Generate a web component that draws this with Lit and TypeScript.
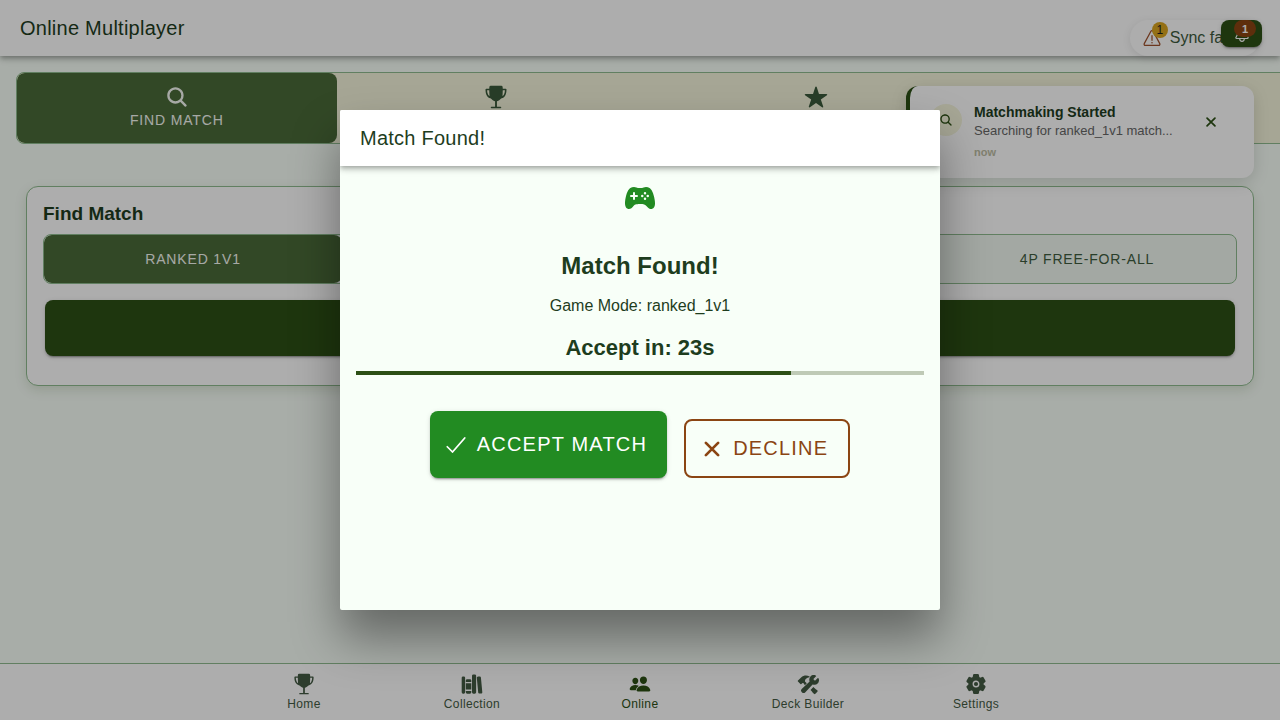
import { LitElement, html, css, svg, nothing } from "lit";
import { customElement, property, state } from "lit/decorators.js";
import { classMap } from "lit/directives/class-map.js";

const ICONS: Record<string, unknown> = {
  search: svg`<path d="M456.69 421.39L362.6 327.3a173.81 173.81 0 0034.84-104.58C397.44 126.38 319.06 48 222.72 48S48 126.38 48 222.72s78.38 174.72 174.72 174.72A173.81 173.81 0 00327.3 362.6l94.09 94.09a25 25 0 0035.3-35.3zM97.92 222.72a124.8 124.8 0 11124.8 124.8 124.95 124.95 0 01-124.8-124.8z"/>`,
  trophy: svg`<path d="M114 46Q115 16 144 16H368Q397 16 398 46L400 80H464a16 16 0 0116 16c0 54-10 99-30 131-18 29-43 48-74 58-12 4-20 12-29 20-20 20-42 36-71 41V464h76a16 16 0 010 32H160a16 16 0 010-32h76V346c-29-5-51-21-71-41-9-8-17-16-29-20-31-10-56-29-74-58C42 195 32 150 32 96A16 16 0 0148 80H112zM65 112c2 38 10 72 24 97 8 14 18 24 29 32-3-40-6-84-6-129zM447 112h-47c0 45-3 89-6 129 11-8 21-18 29-32 14-25 22-59 24-97z"/>`,
  star: svg`<path d="M394 480a16 16 0 01-9.39-3L256 383.76 127.39 477a16 16 0 01-24.55-18.08L153 310.35 23 221.2a16 16 0 019-29.2h160.38l48.4-148.95a16 16 0 0130.44 0l48.4 149H480a16 16 0 019.05 29.2L359 310.35l50.13 148.53A16 16 0 01394 480z"/>`,
  time: svg`<path d="M256 48a208 208 0 100 416 208 208 0 000-416zm96 240h-96a16 16 0 01-16-16V128a16 16 0 0132 0v128h80a16 16 0 010 32z"/>`,
  game: svg`<path d="M483.13 245.38C461.92 149.49 430 98.31 382.65 84.33A107.13 107.13 0 00352 80c-13.71 0-25.65 3.34-38.28 6.88C298.5 91.15 281.21 96 256 96s-42.51-4.84-57.76-9.11C185.6 83.34 173.67 80 160 80a115.74 115.74 0 00-31.73 4.32c-47.1 13.92-79 65.08-100.52 161C4.61 348.54 16 413.71 59.69 428.83a56.62 56.62 0 0018.64 3.22c29.93 0 53.93-24.93 70.33-45.34 18.53-23.1 40.22-34.82 107.34-34.82 59.95 0 84.76 8.13 106.19 34.82 13.47 16.78 26.2 28.52 38.9 35.91 16.89 9.82 33.77 12 50.16 6.37 25.82-8.81 40.62-32.1 44-69.24 2.57-28.48-1.39-65.89-12.17-114.37zM208 240h-32v32a16 16 0 01-32 0v-32h-32a16 16 0 010-32h32v-32a16 16 0 0132 0v32h32a16 16 0 010 32zm84 4a20 20 0 1120-20 20 20 0 01-20 20zm44 44a20 20 0 1120-20 20 20 0 01-20 20zm0-88a20 20 0 1120-20 20 20 0 01-20 20zm44 44a20 20 0 1120-20 20 20 0 01-20 20z"/>`,
  people: svg`<path d="M336 256c-20.56 0-40.44-9.18-56-25.84-15.13-16.25-24.37-37.92-26-61-1.74-24.62 5.77-47.26 21.14-63.76S312 80 336 80c23.83 0 45.38 9.06 60.7 25.52 15.47 16.62 23 39.22 21.26 63.63-1.67 23.11-10.9 44.77-26 61C376.44 246.82 356.57 256 336 256zM467.83 432H204.18a27.71 27.71 0 01-22-10.67 30.22 30.22 0 01-5.26-25.79c8.42-33.81 29.28-61.85 60.32-81.08C264.79 297.4 299.86 288 336 288c36.85 0 71 9 98.71 26.05 31.11 19.13 52 47.33 60.38 81.55a30.27 30.27 0 01-5.32 25.78A27.68 27.68 0 01467.83 432zM147 260c-35.19 0-66.13-32.72-69-72.93-1.42-20.6 5-39.65 18-53.62 12.86-13.83 31-21.45 51-21.45s38 7.66 50.93 21.57c13.1 14.08 19.5 33.09 18 53.52-2.87 40.2-33.8 72.91-68.93 72.91zM212.66 291.45c-17.59-8.6-40.42-12.9-65.65-12.9-29.46 0-58.07 7.68-80.57 21.62-25.51 15.83-42.67 38.88-49.6 66.71a27.39 27.39 0 004.79 23.36A25.32 25.32 0 0041.72 400h111a8 8 0 007.87-6.57c.11-.63.25-1.26.41-1.88 8.48-34.06 28.35-62.84 57.71-83.82a8 8 0 00-.63-13.39c-1.57-.92-3.37-1.89-5.42-2.89z"/>`,
  construct: svg`<path d="M503.58 126.2a16.85 16.85 0 00-27.07-4.55l-51.15 51.15a11.15 11.15 0 01-15.66 0l-22.48-22.48a11.17 11.17 0 010-15.67l50.88-50.89a16.85 16.85 0 00-5.27-27.4c-39.71-17-89.08-7.45-120 23.29-26.81 26.61-34.83 68-22 113.7a11 11 0 01-3.16 11.1L114.77 365.1a56.76 56.76 0 1080.14 80.18L357 272.08a11 11 0 0110.9-3.17c45 12 86 4 112.43-22 15.2-15 25.81-36.17 29.89-59.71 3.83-22.2 1.41-44.44-6.64-61z"/><path d="M437 378c-14-12-34-30-56-50l-66 70c20 22 38 42 48 54l30 31a24 24 0 0035 1l46-46a24 24 0 00-2-35zM228 240l-38-36c-6-7-7-16-4-26 6-20 5-28 24-44 20-17 50-30 78-34 10-3 12-12 4-18-60-36-140-30-196 22l-74 72c-8 8-8 14 0 22l58 60c7 7 14 7 21 0l22-22c6-6 16-8 24-3l37 50z"/>`,
  settings: svg`<circle cx="256" cy="256" r="48"/><path d="M470.39 300l-.47-.38-31.56-24.75a16.11 16.11 0 01-6.1-13.33v-11.56a16 16 0 016.11-13.22L469.92 212l.47-.38a26.68 26.68 0 005.9-34.06l-42.71-73.9a1.59 1.59 0 01-.13-.22A26.86 26.86 0 00401 92.14l-.35.13-37.1 14.93a15.94 15.94 0 01-14.47-1.29q-4.92-3.1-10-5.86a15.94 15.94 0 01-8.19-11.82l-5.59-39.59-.12-.72A27.22 27.22 0 00298.76 26h-85.52a26.92 26.92 0 00-26.45 22.39l-.09.56-5.57 39.67a16 16 0 01-8.13 11.82 175.21 175.21 0 00-10 5.82 15.92 15.92 0 01-14.43 1.27l-37.13-15-.35-.14a26.87 26.87 0 00-32.48 11.34l-.13.22-42.77 73.95a26.71 26.71 0 005.9 34.1l.47.38 31.56 24.75a16.11 16.11 0 016.1 13.33v11.56a16 16 0 01-6.11 13.22L42.08 300l-.47.38a26.68 26.68 0 00-5.9 34.06l42.71 73.9a1.59 1.59 0 01.13.22 26.86 26.86 0 0032.45 11.3l.35-.13 37.07-14.93a15.94 15.94 0 0114.47 1.29q4.92 3.11 10 5.86a15.94 15.94 0 018.19 11.82l5.56 39.59.12.72A27.22 27.22 0 00213.24 486h85.52a26.92 26.92 0 0026.45-22.39l.09-.56 5.57-39.67a16 16 0 018.18-11.82c3.42-1.84 6.76-3.79 10-5.82a15.92 15.92 0 0114.43-1.27l37.13 14.95.35.14a26.85 26.85 0 0032.48-11.34 2.53 2.53 0 01.13-.22l42.71-73.89a26.7 26.7 0 00-5.89-34.11zm-134.48-40.24a80 80 0 11-83.66-83.67 80.21 80.21 0 0183.66 83.67z"/>`,
  library: svg`<path d="M64 480H48a32 32 0 01-32-32V112a32 32 0 0132-32h16a32 32 0 0132 32v336a32 32 0 01-32 32zM240 176a32 32 0 00-32-32h-64a32 32 0 00-32 32v28a4 4 0 004 4h120a4 4 0 004-4zM112 448a32 32 0 0032 32h64a32 32 0 0032-32v-30a2 2 0 00-2-2H114a2 2 0 00-2 2zM112 240h128v144H112zM320 480h-32a32 32 0 01-32-32V64a32 32 0 0132-32h32a32 32 0 0132 32v384a32 32 0 01-32 32zM495.89 445.45l-32.23-340c-1.48-15.65-16.94-27-34.53-25.31l-31.85 3c-17.59 1.67-30.65 15.71-29.17 31.36l32.23 340c1.48 15.65 16.94 27 34.53 25.31l31.85-3c17.59-1.67 30.65-15.71 29.17-31.36z"/>`,
  warning: svg`<path class="line" d="M85.57 446.25h340.86a32 32 0 0028.17-47.17L284.18 82.58c-12.09-22.44-44.27-22.44-56.36 0L57.4 399.08a32 32 0 0028.17 47.17z"/><path class="line" d="M256 196v118"/><circle cx="256" cy="377" r="20"/>`,
  bell: svg`<path class="line" d="M427.68 351.43C402 320 383.87 304 383.87 217.35 383.87 138 343.35 109.73 310 96c-4.43-1.82-8.6-6-9.95-10.55C294.2 65.54 277.8 48 256 48s-38.21 17.55-44 37.47c-1.35 4.6-5.52 8.71-9.95 10.53-33.39 13.75-73.87 41.92-73.87 121.35C128.13 304 110 320 84.32 351.43 73.68 364.45 83 384 101.61 384h308.88c18.51 0 27.77-19.61 17.19-32.57zM320 384v16a64 64 0 01-128 0v-16"/>`,
  close: svg`<path class="line heavy" d="M144 144l224 224M368 144L144 368"/>`,
  check: svg`<path class="line" d="M416 128L192 384l-96-96"/>`,
};

@customElement("app-icon")
export class AppIcon extends LitElement {
  @property() name = "";

  static styles = css`
    :host {
      display: inline-block;
      flex: none;
      width: 24px;
      height: 24px;
    }
    .glyph {
      display: block;
      width: 100%;
      height: 100%;
      fill: currentColor;
    }
    .line {
      fill: none;
      stroke: currentColor;
      stroke-width: 32;
      stroke-linecap: round;
      stroke-linejoin: round;
    }
    .heavy {
      stroke-width: 50;
    }
  `;

  render() {
    return html`<svg class="glyph" viewBox="0 0 512 512" aria-hidden="true">${ICONS[this.name]}</svg>`;
  }
}

interface Choice {
  id: string;
  label?: string;
  name: string;
  icon?: string;
}

const VIEWS: Choice[] = [
  { id: "find", icon: "search", label: "Find Match", name: "Find match" },
  { id: "ranks", icon: "trophy", name: "Rankings" },
  { id: "events", icon: "star", name: "Events" },
  { id: "history", icon: "time", name: "History" },
];

const MODES: Choice[] = [
  { id: "ranked_1v1", label: "Ranked 1v1", name: "Ranked 1v1" },
  { id: "casual_1v1", name: "Casual 1v1" },
  { id: "ranked_2v2", name: "Ranked 2v2" },
  { id: "ffa", label: "4P Free-for-all", name: "4P free-for-all" },
];

const TABS = [
  { icon: "trophy", label: "Home" },
  { icon: "library", label: "Collection" },
  { icon: "people", label: "Online" },
  { icon: "construct", label: "Deck Builder" },
  { icon: "settings", label: "Settings" },
];

@customElement("app-root")
export class AppRoot extends LitElement {
  @state() private view = "find";
  @state() private mode = "ranked_1v1";
  @state() private secondsLeft = 23;

  static styles = css`
    :host {
      --primary: #2d5016;
      --danger: #8b4513;
      --ink: #1e3d1e;
      --line: #8fbc8f;
      --surface: #f8fff8;
      --bar-shadow: 0 2px 4px -1px rgba(0, 0, 0, 0.2), 0 4px 5px rgba(0, 0, 0, 0.14),
        0 1px 10px rgba(0, 0, 0, 0.12);
      display: block;
      position: relative;
      height: 100vh;
      overflow: hidden;
      font-family: "Liberation Sans", Arial, sans-serif;
      font-size: 16px;
      color: var(--ink);
      background: var(--surface);
    }
    * {
      box-sizing: border-box;
    }
    button {
      font: inherit;
      color: inherit;
      border: 0;
      padding: 0;
      background: none;
      cursor: pointer;
    }
    h1, h2, h3, p {
      margin: 0;
      font-weight: 400;
    }
    .page {
      display: flex;
      flex-direction: column;
      height: 100%;
    }
    .toolbar {
      position: relative;
      display: flex;
      align-items: center;
      flex: none;
      height: 56px;
      padding: 0 20px;
      background: #fff;
      box-shadow: var(--bar-shadow);
    }
    .toolbar-title {
      font-size: 20px;
      line-height: 24px;
      letter-spacing: 0.0125em;
    }
    .content {
      flex: 1;
      overflow: hidden;
      padding-top: 16px;
    }
    .segment {
      display: grid;
      grid-auto-flow: column;
      grid-auto-columns: 1fr;
      border: 1px solid var(--line);
      border-radius: 8px;
      overflow: hidden;
    }
    .views {
      width: 100%;
      margin-left: 16px;
      background: #f5f5dc;
    }
    .modes {
      background: #f0f8f0;
    }
    .choice {
      display: flex;
      flex-direction: column;
      align-items: center;
      justify-content: center;
      min-height: 48px;
      border-radius: 8px;
      font-size: 14px;
      line-height: 20px;
      letter-spacing: 0.06em;
      text-transform: uppercase;
      color: #3f5c3f;
    }
    .views .choice {
      justify-content: flex-start;
      min-height: 70px;
      padding-top: 12px;
      gap: 1px;
      color: #3b5a3b;
    }
    .choice.selected,
    .views .choice.selected {
      color: #f6f9f4;
      background: #4a6a39;
    }
    .card {
      display: flex;
      flex-direction: column;
      margin: 42px 26px 0;
      padding: 16px 16px 29px;
      border: 1px solid var(--line);
      border-radius: 12px;
      background: #fff;
      box-shadow: 0 4px 12px rgba(45, 80, 22, 0.15);
    }
    .card-title {
      margin-bottom: 9px;
      font-size: 19px;
      font-weight: 700;
      line-height: 22px;
    }
    .start {
      height: 56px;
      margin: 16px 2px 0;
      border-radius: 8px;
      background: var(--primary);
      box-shadow: 0 3px 1px -2px rgba(0, 0, 0, 0.2), 0 2px 2px rgba(0, 0, 0, 0.14),
        0 1px 5px rgba(0, 0, 0, 0.12);
    }
    .tabs {
      display: flex;
      justify-content: center;
      flex: none;
      height: 57px;
      border-top: 1px solid var(--line);
      background: #fff;
    }
    .tab {
      display: flex;
      flex-direction: column;
      align-items: center;
      flex: 0 1 168px;
      padding-top: 9px;
      gap: 1px;
      font-size: 12px;
      line-height: 16px;
      letter-spacing: 0.03em;
      text-decoration: none;
      color: #435a43;
    }
    .tab app-icon {
      width: 22px;
      height: 22px;
    }
    .tab.current {
      color: var(--primary);
    }
    .sync {
      position: absolute;
      top: 20px;
      right: 20px;
      display: flex;
      align-items: center;
      gap: 8px;
      height: 36px;
      padding: 0 12px;
      border-radius: 18px;
      color: #3d5a3d;
      background: #fff;
      box-shadow: 0 2px 8px rgba(0, 0, 0, 0.1);
    }
    .sync app-icon {
      width: 20px;
      height: 20px;
      color: #a0522d;
    }
    .count {
      position: absolute;
      display: flex;
      align-items: center;
      justify-content: center;
      font-size: 12px;
      font-weight: 700;
      line-height: 16px;
    }
    .sync .count {
      top: 2px;
      left: 22px;
      width: 16px;
      height: 16px;
      border-radius: 8px;
      font-weight: 400;
      color: #1f1f1f;
      background: #daa520;
    }
    .inbox {
      position: absolute;
      top: 20px;
      right: 18px;
      display: flex;
      align-items: center;
      justify-content: center;
      width: 41px;
      height: 27px;
      border-radius: 8px;
      color: #fff;
      background: var(--primary);
      box-shadow: 0 3px 1px -2px rgba(0, 0, 0, 0.2), 0 2px 2px rgba(0, 0, 0, 0.14),
        0 1px 5px rgba(0, 0, 0, 0.12);
    }
    .inbox app-icon {
      width: 18px;
      height: 18px;
    }
    .inbox .count {
      top: 0;
      right: 6px;
      width: 22px;
      height: 17px;
      border-radius: 10px;
      font-size: 11px;
      background: var(--danger);
    }
    .toast {
      position: absolute;
      top: 86px;
      right: 26px;
      display: flex;
      align-items: flex-start;
      width: 348px;
      min-height: 92px;
      padding: 16px 34px 16px 20px;
      border-left: 4px solid var(--primary);
      border-radius: 12px;
      background: #fff;
      box-shadow: 0 4px 16px rgba(0, 0, 0, 0.15);
    }
    .toast-icon {
      display: flex;
      align-items: center;
      justify-content: center;
      width: 32px;
      height: 32px;
      margin: 2px 12px 0 0;
      border-radius: 50%;
      color: var(--primary);
      background: #f5f5dc;
    }
    .toast-icon app-icon {
      width: 14px;
      height: 14px;
    }
    .toast-text {
      flex: 1;
    }
    .toast-title {
      font-size: 14px;
      font-weight: 700;
      line-height: 20px;
    }
    .toast-body {
      font-size: 13px;
      line-height: 17px;
      color: #666;
    }
    .toast-time {
      margin-top: 6px;
      font-size: 11px;
      font-weight: 700;
      line-height: 14px;
      color: #bdbda4;
    }
    .toast-close {
      display: flex;
      margin-top: 11px;
      color: var(--primary);
    }
    .toast-close app-icon {
      width: 18px;
      height: 18px;
    }
    .backdrop {
      position: absolute;
      inset: 0;
      display: flex;
      align-items: center;
      justify-content: center;
      background: rgba(0, 0, 0, 0.32);
    }
    .modal {
      display: flex;
      flex-direction: column;
      width: 600px;
      max-width: 100%;
      height: 500px;
      max-height: 100%;
      border-radius: 2px;
      overflow: hidden;
      background: var(--surface);
      box-shadow: 0 28px 48px rgba(0, 0, 0, 0.4);
    }
    .modal-body {
      display: flex;
      flex-direction: column;
      align-items: center;
      padding: 16px;
    }
    .modal-icon {
      width: 32px;
      height: 32px;
      color: #228b22;
    }
    .found {
      margin-top: 38px;
      font-size: 24px;
      font-weight: 700;
      line-height: 28px;
    }
    .game-mode {
      margin-top: 16px;
      line-height: 20px;
    }
    .countdown {
      margin-top: 18px;
      font-size: 22px;
      font-weight: 700;
      line-height: 28px;
    }
    .meter {
      align-self: stretch;
      height: 4px;
      margin-top: 9px;
      background: #bfcab6;
    }
    .meter-fill {
      height: 100%;
      background: var(--primary);
    }
    .actions {
      display: flex;
      align-items: flex-end;
      gap: 17px;
      margin-top: 36px;
    }
    .action {
      display: flex;
      align-items: center;
      gap: 7px;
      padding: 0 20px 0 12px;
      border-radius: 8px;
      font-size: 20px;
      letter-spacing: 0.06em;
      text-transform: uppercase;
    }
    .action app-icon {
      width: 28px;
      height: 28px;
    }
    .accept {
      height: 67px;
      color: #fff;
      background: #228b22;
      box-shadow: 0 3px 1px -2px rgba(0, 0, 0, 0.2), 0 2px 2px rgba(0, 0, 0, 0.14),
        0 1px 5px rgba(0, 0, 0, 0.12);
    }
    .decline {
      height: 59px;
      border: 2px solid var(--danger);
      color: var(--danger);
    }
  `;

  private segment(kind: string, items: Choice[], current: string, pick: (id: string) => void) {
    return html`<div class="segment ${kind}" role="group">
      ${items.map(
        (item) => html`<button
          class=${classMap({ choice: true, selected: item.id === current })}
          aria-label=${item.name}
          aria-pressed=${item.id === current}
          @click=${() => pick(item.id)}
        >
          ${item.icon ? html`<app-icon name=${item.icon}></app-icon>` : nothing}
          ${item.label ? html`<span>${item.label}</span>` : nothing}
        </button>`
      )}
    </div>`;
  }

  render() {
    return html`
      <div class="page">
        <header class="toolbar"><h1 class="toolbar-title">Online Multiplayer</h1></header>
        <main class="content">
          ${this.segment("views", VIEWS, this.view, (id) => (this.view = id))}
          <section class="card">
            <h2 class="card-title">Find Match</h2>
            ${this.segment("modes", MODES, this.mode, (id) => (this.mode = id))}
            <button class="start" aria-label="Start search"></button>
          </section>
        </main>
        <nav class="tabs">
          ${TABS.map(
            (tab) => html`<a href="#" class=${classMap({ tab: true, current: tab.label === "Online" })}>
              <app-icon name=${tab.icon}></app-icon><span>${tab.label}</span>
            </a>`
          )}
        </nav>
      </div>

      <div class="sync" role="status">
        <app-icon name="warning"></app-icon><span>Sync failed</span><span class="count">1</span>
      </div>
      <button class="inbox" aria-label="Notifications">
        <app-icon name="bell"></app-icon><span class="count">1</span>
      </button>

      <aside class="toast">
        <div class="toast-icon"><app-icon name="search"></app-icon></div>
        <div class="toast-text">
          <p class="toast-title">Matchmaking Started</p>
          <p class="toast-body">Searching for ranked_1v1 match...</p>
          <p class="toast-time">now</p>
        </div>
        <button class="toast-close" aria-label="Dismiss"><app-icon name="close"></app-icon></button>
      </aside>

      <div class="backdrop">
        <section class="modal" role="dialog" aria-modal="true" aria-labelledby="modal-title">
          <header class="toolbar"><h2 class="toolbar-title" id="modal-title">Match Found!</h2></header>
          <div class="modal-body">
            <app-icon class="modal-icon" name="game"></app-icon>
            <h2 class="found">Match Found!</h2>
            <p class="game-mode">Game Mode: ranked_1v1</p>
            <h3 class="countdown">Accept in: ${this.secondsLeft}s</h3>
            <div class="meter" role="progressbar" aria-valuenow=${this.secondsLeft} aria-valuemax="30">
              <div class="meter-fill" style="width:${(this.secondsLeft / 30) * 100}%"></div>
            </div>
            <div class="actions">
              <button class="action accept"><app-icon name="check"></app-icon>Accept Match</button>
              <button class="action decline"><app-icon name="close"></app-icon>Decline</button>
            </div>
          </div>
        </section>
      </div>
    `;
  }
}
